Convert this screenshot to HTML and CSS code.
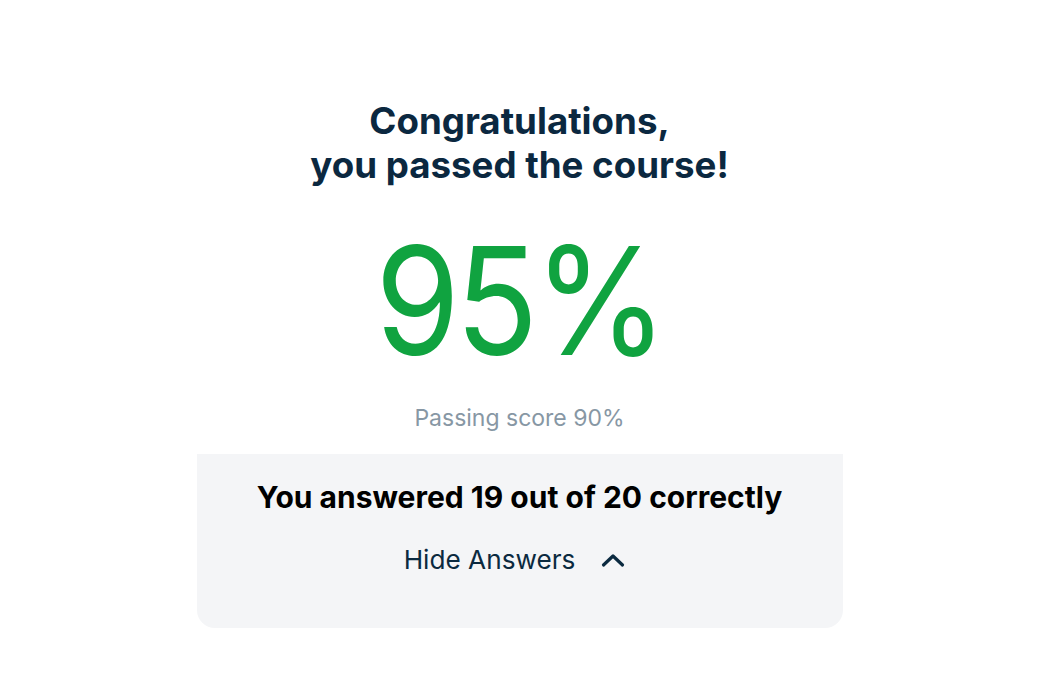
FILE: index.html
```html
<!DOCTYPE html>
<html>
<head>
<meta charset="utf-8">
<link rel="stylesheet" href="styles.css">
</head>
<body>
<main class="result">
  <h1 class="title">Congratulations,<br>you passed the course!</h1>
  <div class="score">95%</div>
  <p class="passing">Passing score 90%</p>
  <section class="panel">
    <p class="answered">You answered 19 out of 20 correctly</p>
    <button class="toggle">
      <span>Hide Answers</span>
      <svg class="chev" width="24" height="16" viewBox="0 0 24 16"><path d="M2.5 13 L12 4 L21.5 13" fill="none" stroke="#0b2a40" stroke-width="3.2" stroke-linecap="round" stroke-linejoin="round"/></svg>
    </button>
  </section>
</main>
</body>
</html>
```
FILE: styles.css
```css
* { box-sizing: border-box; }
html, body { margin: 0; padding: 0; background: #fff; }
body { font-family: Inter, "Noto Sans", sans-serif; }
.result {
  display: flex;
  flex-direction: column;
  align-items: center;
  padding-top: 99px;
}
.title {
  margin: 0;
  font-size: 36.7px;
  line-height: 44px;
  font-weight: 700;
  color: #0b2840;
  text-align: center;
}
.score {
  margin-top: 39px;
  font-size: 150px;
  line-height: 150px;
  font-weight: 400;
  color: #10a340;
  letter-spacing: -5px;
  transform: scaleX(0.91);
}
.passing {
  margin: 28px 0 0;
  font-size: 23px;
  line-height: 28px;
  color: #8797a4;
}
.panel {
  margin-top: 22px;
  width: 646px;
  height: 174px;
  background: #f4f5f7;
  border-radius: 0 0 18px 18px;
  display: flex;
  flex-direction: column;
  align-items: center;
  padding-top: 25px;
}
.answered {
  margin: 0;
  font-size: 30px;
  line-height: 36px;
  font-weight: 700;
  color: #000;
}
.toggle {
  margin-top: 29px;
  margin-right: 10px;
  display: flex;
  align-items: center;
  gap: 26px;
  background: none;
  border: 0;
  padding: 0;
  font-family: inherit;
  font-size: 26.2px;
  line-height: 32px;
  color: #0b2a40;
  cursor: pointer;
}
.chev { display: block; }
```
